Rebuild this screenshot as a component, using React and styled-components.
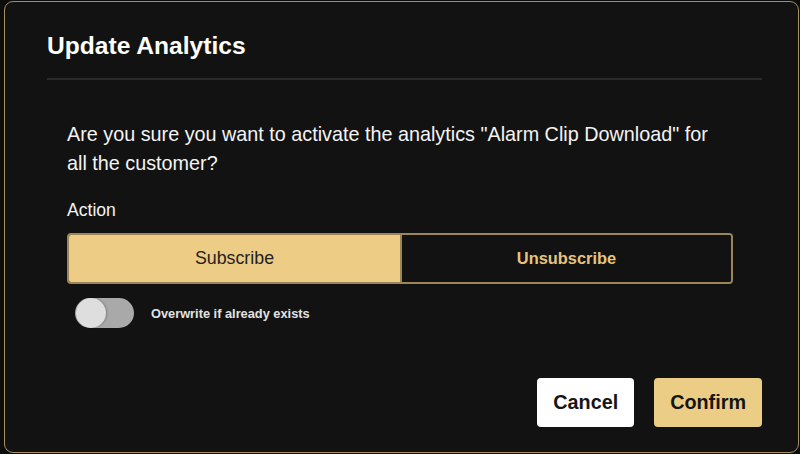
import React, { useState } from "react"
import styled, { createGlobalStyle } from "styled-components"

const GlobalStyle = createGlobalStyle`
  html, body {
    margin: 0;
    padding: 0;
    background: #0c0c0c;
    font-family: "Liberation Sans", Arial, sans-serif;
  }
  * {
    box-sizing: border-box;
  }
`

const Page = styled.div`
  width: 800px;
  height: 454px;
  padding: 1px 1px 1px 4px;
  overflow: hidden;
`

const Dialog = styled.div`
  height: 452px;
  background: #121212;
  border: 1.5px solid #a88f5e;
  border-radius: 9px;
  padding: 0 36px 0 42px;
  display: flex;
  flex-direction: column;
`

const Header = styled.div`
  padding: 30px 0 18px 0;
  border-bottom: 2px solid #2a2a2a;
`

const Title = styled.h2`
  margin: 0;
  font-size: 24.6px;
  font-weight: 700;
  line-height: 28px;
  color: #ffffff;
`

const Body = styled.div`
  padding: 40px 29px 0 20px;
  display: flex;
  flex-direction: column;
`

const Question = styled.p`
  margin: 0;
  padding-right: 6px;
  font-size: 19.8px;
  line-height: 29px;
  color: #f4f4f4;
`

const Label = styled.div`
  margin-top: 22px;
  font-size: 17.6px;
  line-height: 20px;
  color: #f4f4f4;
`

const Segmented = styled.div`
  margin-top: 13px;
  display: grid;
  grid-template-columns: 1fr 1fr;
  height: 51px;
  border: 2px solid #9c8556;
  border-radius: 4px;
  overflow: hidden;
`

const Segment = styled.button`
  border: none;
  margin: 0;
  padding: 0;
  font-family: inherit;
  cursor: pointer;
  background: ${p => (p.$active ? "#edcd85" : "#121212")};
  color: ${p => (p.$active ? "#222222" : "#e6c47c")};
  font-size: ${p => (p.$active ? "17.8px" : "16.4px")};
  font-weight: ${p => (p.$active ? 400 : 700)};
  border-left: ${p => (p.$active ? "none" : "2px solid #9c8556")};
`

const SwitchRow = styled.label`
  margin-top: 14px;
  margin-left: 8px;
  display: flex;
  align-items: center;
  gap: 17px;
  cursor: pointer;
`

const Track = styled.span`
  position: relative;
  display: inline-block;
  width: 59px;
  height: 30px;
  border-radius: 15px;
  background: #a9a9a9;
`

const Knob = styled.span`
  position: absolute;
  top: 0;
  left: ${p => (p.$on ? "29px" : "1px")};
  width: 30px;
  height: 30px;
  border-radius: 50%;
  background: #dedede;
  box-shadow: 1px 0 2px rgba(0, 0, 0, 0.25);
`

const SwitchText = styled.span`
  font-size: 12.8px;
  font-weight: 700;
  color: #e2e2e2;
`

const Footer = styled.div`
  margin-top: 50px;
  display: flex;
  justify-content: flex-end;
  gap: 20px;
`

const Button = styled.button`
  height: 49px;
  padding: 0 16px;
  border: none;
  border-radius: 4px;
  font-family: inherit;
  font-size: 19.8px;
  font-weight: 700;
  color: #151515;
  background: ${p => (p.$primary ? "#eccd86" : "#ffffff")};
  cursor: pointer;
`

export default function App() {
  const [action, setAction] = useState("subscribe")
  const [overwrite, setOverwrite] = useState(false)

  return (
    <>
      <GlobalStyle />
      <Page>
        <Dialog>
          <Header>
            <Title>Update Analytics</Title>
          </Header>
          <Body>
            <Question>
              Are you sure you want to activate the analytics "Alarm Clip
              Download" for all the customer?
            </Question>
            <Label>Action</Label>
            <Segmented>
              <Segment
                $active={action === "subscribe"}
                onClick={() => setAction("subscribe")}
              >
                Subscribe
              </Segment>
              <Segment
                $active={action === "unsubscribe"}
                onClick={() => setAction("unsubscribe")}
              >
                Unsubscribe
              </Segment>
            </Segmented>
            <SwitchRow onClick={() => setOverwrite(!overwrite)}>
              <Track>
                <Knob $on={overwrite} />
              </Track>
              <SwitchText>Overwrite if already exists</SwitchText>
            </SwitchRow>
          </Body>
          <Footer>
            <Button>Cancel</Button>
            <Button $primary>Confirm</Button>
          </Footer>
        </Dialog>
      </Page>
    </>
  )
}
